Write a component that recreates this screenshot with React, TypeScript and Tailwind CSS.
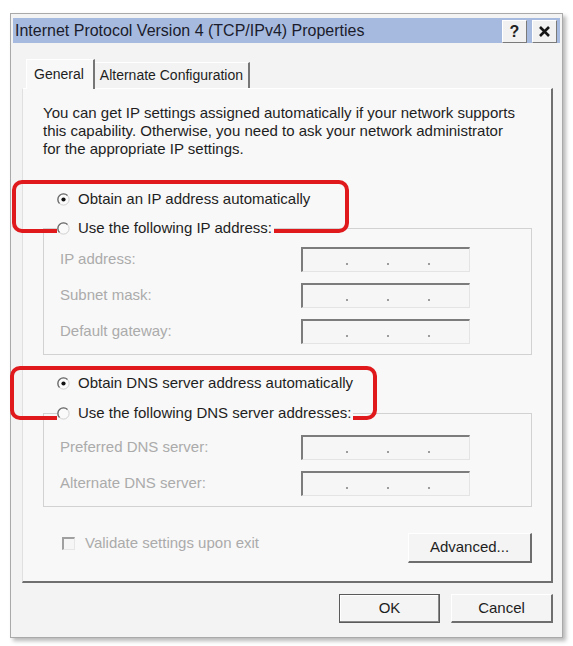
import type { ReactNode } from "react";

function RadioMark({ checked }: { checked?: boolean }) {
  return (
    <svg width="13" height="13" viewBox="0 0 13 13" className="shrink-0">
      <circle cx="6.5" cy="6.5" r="5.6" fill="#fafafa" stroke="#cfcfcf" />
      <path d="M2.5 10.5A5.6 5.6 0 0 1 10.5 2.5" fill="none" stroke="#6a6a6a" strokeWidth="1.3" />
      {checked && <circle cx="6.5" cy="6.5" r="2.1" fill="#111" />}
    </svg>
  );
}

function Radio({ checked, children }: { checked?: boolean; children: ReactNode }) {
  return (
    <div className="relative z-10 ml-[14px] flex h-[20px] w-fit items-center gap-[8px] bg-[#f8f8f8] pr-[2px]">
      <RadioMark checked={checked} />
      <span className="text-[15px] text-[#1e1e1e]">{children}</span>
    </div>
  );
}

function IpField() {
  return (
    <div className="flex h-[25px] w-[169px] items-end gap-[39px] border-t-2 border-l-2 border-r border-b border-t-[#7c7c7c] border-l-[#7c7c7c] border-r-[#e4e4e4] border-b-[#e4e4e4] bg-[#f6f6f6] pb-[6px] pl-[43px]">
      <span className="h-[2px] w-[2px] bg-[#9c9c9c]" />
      <span className="h-[2px] w-[2px] bg-[#9c9c9c]" />
      <span className="h-[2px] w-[2px] bg-[#9c9c9c]" />
    </div>
  );
}

function FieldRow({ label }: { label: string }) {
  return (
    <div className="flex h-[25px] items-center">
      <span className="w-[241px] text-[15px] text-[#ababab]">{label}</span>
      <IpField />
    </div>
  );
}

function GroupBox({ pt, children }: { pt: string; children: ReactNode }) {
  return (
    <div className={`-mt-[10px] flex flex-col gap-[11px] border border-[#d2d2d2] pb-[10px] pl-[16px] ${pt}`}>
      {children}
    </div>
  );
}

function PushButton({ label, width, isDefault }: { label: string; width: string; isDefault?: boolean }) {
  return (
    <button
      className={`flex items-center justify-center bg-[#f4f4f4] text-[15px] text-[#1e1e1e] ${width} ${
        isDefault
          ? "h-[29px] border border-[#5a5a5a] shadow-[inset_-1px_-1px_0_#8a8a8a,inset_1px_1px_0_#ffffff]"
          : "border-t border-l border-t-[#ffffff] border-l-[#ffffff] border-r-2 border-b-2 border-r-[#6e6e6e] border-b-[#6e6e6e]"
      }`}
    >
      {label}
    </button>
  );
}

function CaptionButton({ children }: { children: ReactNode }) {
  return (
    <div className="flex h-[23px] w-[25px] items-center justify-center border-t border-l border-t-[#ffffff] border-l-[#ffffff] border-r border-b border-r-[#7a7a7a] border-b-[#7a7a7a] bg-[#f1f1f1]">
      {children}
    </div>
  );
}

export default function App() {
  return (
    <div className="relative h-[646px] w-[573px] overflow-hidden bg-white pt-[13px] font-['Liberation_Sans',Arial,sans-serif]">
      {/* dialog window */}
      <div className="ml-[10px] flex h-[625px] w-[553px] flex-col border border-[#a9a9a9] bg-[#f3f3f3] px-[2px] pt-[4px] shadow-[3px_3px_4px_rgba(0,0,0,0.28)]">
        <div className="flex h-[25px] items-center justify-between bg-[#a6badf] pl-[2px] pr-[3px]">
          <span className="text-[16px] text-[#1b1c2c]">Internet Protocol Version 4 (TCP/IPv4) Properties</span>
          <div className="flex gap-[5px] self-end">
            <CaptionButton>
              <span className="text-[16px] font-bold text-[#222]">?</span>
            </CaptionButton>
            <CaptionButton>
              <svg width="13" height="13" viewBox="0 0 13 13">
                <path d="M2 2L11 11M11 2L2 11" stroke="#151515" strokeWidth="2.6" />
              </svg>
            </CaptionButton>
          </div>
        </div>

        <div className="flex flex-col pl-[9px] pr-[7px]">
          {/* tabs */}
          <div className="mt-[16px] flex h-[29px] items-end pl-[4px]">
            <div className="relative z-10 -mb-[1px] flex h-[30px] items-center border-t border-l border-t-[#ffffff] border-l-[#ffffff] border-r-2 border-r-[#767676] bg-[#f8f8f8] pl-[7px] pr-[9px] text-[14px] text-[#1e1e1e]">
              General
            </div>
            <div className="flex h-[26px] items-center border-t border-t-[#ffffff] border-r-2 border-r-[#767676] pl-[5px] pr-[5px] text-[14px] text-[#1e1e1e]">
              Alternate Configuration
            </div>
          </div>

          {/* tab page */}
          <div className="flex h-[495px] flex-col border-t border-l border-t-[#ffffff] border-l-[#e0e0e0] border-r-2 border-b-2 border-r-[#6f6f6f] border-b-[#6f6f6f] bg-[#f8f8f8] pl-[20px] pr-[19px] pt-[15px]">
            <p className="w-[480px] text-[15px] leading-[18px] text-[#1e1e1e]">
              You can get IP settings assigned automatically if your network supports this capability. Otherwise, you need to ask your network administrator for the appropriate IP settings.
            </p>

            <div className="mt-[31px]">
              <Radio checked>Obtain an IP address automatically</Radio>
            </div>
            <div className="mt-[9px]">
              <Radio>Use the following IP address:</Radio>
            </div>
            <GroupBox pt="pt-[18px]">
              <FieldRow label="IP address:" />
              <FieldRow label="Subnet mask:" />
              <FieldRow label="Default gateway:" />
            </GroupBox>

            <div className="mt-[18px]">
              <Radio checked>Obtain DNS server address automatically</Radio>
            </div>
            <div className="mt-[10px]">
              <Radio>Use the following DNS server addresses:</Radio>
            </div>
            <GroupBox pt="pt-[21px]">
              <FieldRow label="Preferred DNS server:" />
              <FieldRow label="Alternate DNS server:" />
            </GroupBox>

            <div className="mt-[26px] flex items-start justify-between">
              <div className="ml-[19px] flex h-[20px] items-center gap-[10px]">
                <span className="h-[13px] w-[13px] border-t-2 border-l-2 border-r border-b border-t-[#a0a0a0] border-l-[#a0a0a0] border-r-[#e6e6e6] border-b-[#e6e6e6] bg-[#f6f6f6]" />
                <span className="text-[15px] text-[#ababab]">Validate settings upon exit</span>
              </div>
              <PushButton label="Advanced..." width="h-[30px] w-[124px]" />
            </div>
          </div>

          {/* dialog buttons */}
          <div className="mt-[11px] flex justify-end gap-[11px]">
            <PushButton label="OK" width="w-[101px]" isDefault />
            <PushButton label="Cancel" width="h-[29px] w-[102px]" />
          </div>
        </div>
      </div>

      {/* red highlight marks */}
      <div className="absolute left-[12px] top-[180px] h-[53px] w-[337px] rounded-[10px] border-[4px] border-[#e01a1c]" />
      <div className="absolute left-[10px] top-[366px] h-[54px] w-[367px] rounded-[10px] border-[4px] border-[#e01a1c]" />
    </div>
  );
}
